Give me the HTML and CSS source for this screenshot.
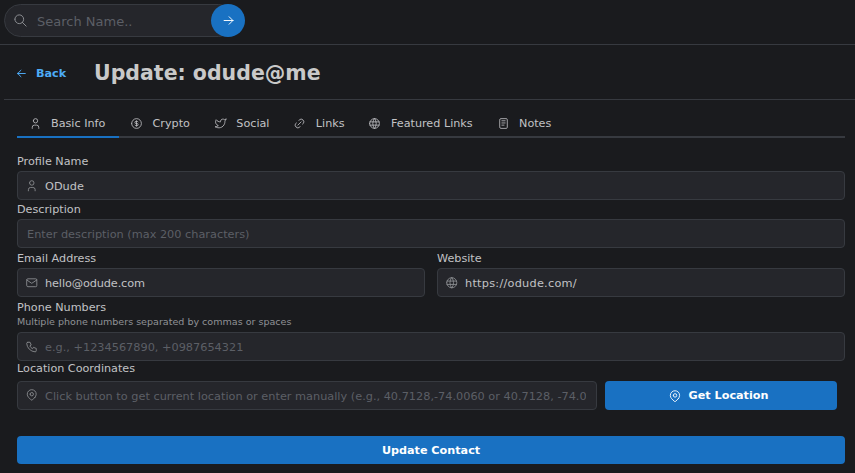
FILE: index.html
```html
<!DOCTYPE html>
<html lang="en">
<head>
<meta charset="utf-8">
<title>Update: odude@me</title>
<link rel="stylesheet" href="styles.css">
</head>
<body>
<svg class="defs" width="0" height="0" aria-hidden="true">
  <defs>
    <symbol id="i-user" viewBox="0 0 24 24"><path d="M8 7a4 4 0 1 0 8 0a4 4 0 0 0-8 0"/><path d="M6 21v-2a4 4 0 0 1 4-4h4a4 4 0 0 1 4 4v2"/></symbol>
    <symbol id="i-coin" viewBox="0 0 24 24"><path d="M3 12a9 9 0 1 0 18 0a9 9 0 0 0-18 0"/><path d="M14.8 9a2 2 0 0 0-1.8-1h-2a2 2 0 1 0 0 4h2a2 2 0 1 1 0 4h-2a2 2 0 0 1-1.8-1"/><path d="M12 7v10"/></symbol>
    <symbol id="i-twitter" viewBox="0 0 24 24"><path d="M22 4.01c-1 .49-1.98.689-3 .99c-1.121-1.265-2.783-1.335-4.38-.737S11.977 6.323 12 8v1c-3.245.083-6.135-1.395-8-4c0 0-4.182 7.433 4 11c-1.872 1.247-3.739 2.088-6 2c3.308 1.803 6.913 2.423 10.034 1.517c3.58-1.04 6.522-3.723 7.651-7.742a13.84 13.84 0 0 0 .497-3.753c0-.249 1.51-2.772 1.818-4.013z"/></symbol>
    <symbol id="i-link" viewBox="0 0 24 24"><path d="M9 15l6-6"/><path d="M11 6l.463-.536a5 5 0 0 1 7.071 7.072L18 13"/><path d="M13 18l-.397.534a5.068 5.068 0 0 1-7.127 0a4.972 4.972 0 0 1 0-7.071L6 11"/></symbol>
    <symbol id="i-world" viewBox="0 0 24 24"><path d="M3 12a9 9 0 1 0 18 0a9 9 0 0 0-18 0"/><path d="M3.6 9h16.8"/><path d="M3.6 15h16.8"/><path d="M11.5 3a17 17 0 0 0 0 18"/><path d="M12.5 3a17 17 0 0 1 0 18"/></symbol>
    <symbol id="i-notes" viewBox="0 0 24 24"><path d="M5 5a2 2 0 0 1 2-2h10a2 2 0 0 1 2 2v14a2 2 0 0 1-2 2H7a2 2 0 0 1-2-2z"/><path d="M9 7h6"/><path d="M9 11h6"/><path d="M9 15h4"/></symbol>
    <symbol id="i-mail" viewBox="0 0 24 24"><path d="M3 7a2 2 0 0 1 2-2h14a2 2 0 0 1 2 2v10a2 2 0 0 1-2 2H5a2 2 0 0 1-2-2z"/><path d="M3 7l9 6l9-6"/></symbol>
    <symbol id="i-phone" viewBox="0 0 24 24"><path d="M5 4h4l2 5l-2.5 1.5a11 11 0 0 0 5 5l1.5-2.5l5 2v4a2 2 0 0 1-2 2A16 16 0 0 1 3 6a2 2 0 0 1 2-2"/></symbol>
    <symbol id="i-pin" viewBox="0 0 24 24"><path d="M9 11a3 3 0 1 0 6 0a3 3 0 0 0-6 0"/><path d="M17.657 16.657L13.414 20.9a2 2 0 0 1-2.827 0l-4.244-4.243a8 8 0 1 1 11.314 0z"/></symbol>
    <symbol id="i-search" viewBox="0 0 24 24"><path d="M3 10a7 7 0 1 0 14 0a7 7 0 0 0-14 0"/><path d="M21 21l-6-6"/></symbol>
    <symbol id="i-right" viewBox="0 0 24 24"><path d="M5 12h14"/><path d="M13 18l6-6"/><path d="M13 6l6 6"/></symbol>
    <symbol id="i-left" viewBox="0 0 24 24"><path d="M5 12h14"/><path d="M5 12l6 6"/><path d="M5 12l6-6"/></symbol>
  </defs>
</svg>

<header class="topbar">
  <div class="search">
    <svg class="icon search-icon"><use href="#i-search"/></svg>
    <input class="search-input" type="text" placeholder="Search Name..">
    <button class="search-go" type="button"><svg class="icon go-icon"><use href="#i-right"/></svg></button>
  </div>
</header>

<main class="page">
  <div class="title-row">
    <a class="back" href="#"><svg class="icon back-icon"><use href="#i-left"/></svg><span>Back</span></a>
    <h1 class="title">Update: odude@me</h1>
  </div>

  <section class="panel">
    <nav class="tabs">
      <a class="tab tab-active" href="#"><svg class="icon tab-icon"><use href="#i-user"/></svg>Basic Info</a>
      <a class="tab" href="#"><svg class="icon tab-icon"><use href="#i-coin"/></svg>Crypto</a>
      <a class="tab" href="#"><svg class="icon tab-icon"><use href="#i-twitter"/></svg>Social</a>
      <a class="tab" href="#"><svg class="icon tab-icon"><use href="#i-link"/></svg>Links</a>
      <a class="tab" href="#"><svg class="icon tab-icon"><use href="#i-world"/></svg>Featured Links</a>
      <a class="tab" href="#"><svg class="icon tab-icon"><use href="#i-notes"/></svg>Notes</a>
    </nav>

    <form class="form">
      <div class="field">
        <label class="label">Profile Name</label>
        <div class="control"><svg class="icon ctl-icon"><use href="#i-user"/></svg><input class="input" type="text" value="ODude"></div>
      </div>
      <div class="field">
        <label class="label">Description</label>
        <div class="control control-plain"><input class="input" type="text" placeholder="Enter description (max 200 characters)"></div>
      </div>
      <div class="two-col">
        <div class="field">
          <label class="label">Email Address</label>
          <div class="control"><svg class="icon ctl-icon"><use href="#i-mail"/></svg><input class="input input-email" type="text" value="hello@odude.com"></div>
        </div>
        <div class="field">
          <label class="label">Website</label>
          <div class="control"><svg class="icon ctl-icon"><use href="#i-world"/></svg><input class="input input-url" type="text" value="https://odude.com/"></div>
        </div>
      </div>
      <div class="field">
        <label class="label">Phone Numbers</label>
        <p class="help">Multiple phone numbers separated by commas or spaces</p>
        <div class="control"><svg class="icon ctl-icon"><use href="#i-phone"/></svg><input class="input" type="text" placeholder="e.g., +1234567890, +0987654321"></div>
      </div>
      <div class="location">
        <div class="field location-field">
          <label class="label">Location Coordinates</label>
          <div class="control"><svg class="icon ctl-icon"><use href="#i-pin"/></svg><input class="input" type="text" placeholder="Click button to get current location or enter manually (e.g., 40.7128,-74.0060 or 40.7128, -74.0060)"></div>
        </div>
        <button class="btn btn-location" type="button"><svg class="icon btn-icon"><use href="#i-pin"/></svg>Get Location</button>
      </div>
      <button class="btn btn-submit" type="button">Update Contact</button>
    </form>
  </section>
</main>
</body>
</html>
```
FILE: styles.css
```css
* { box-sizing: border-box; }
html, body { height: 100%; }
body {
  margin: 0;
  background: #1a1b1e;
  color: #c1c2c5;
  font-family: "DejaVu Sans", Verdana, sans-serif;
  font-size: 11.2px;
  overflow: hidden;
}
.defs { position: absolute; }
.icon {
  fill: none;
  stroke: currentColor;
  stroke-width: 1.5;
  stroke-linecap: round;
  stroke-linejoin: round;
  flex: none;
}

.topbar {
  height: 45px;
  padding: 4px 0 0 4px;
  border-bottom: 1px solid #373a40;
}
.search {
  display: flex;
  align-items: center;
  width: 241px;
  height: 33px;
  position: relative;
}
.search-input {
  width: 231px;
  height: 33px;
  padding: 1px 30px 0 32px;
  border: 1px solid #373a40;
  border-radius: 17px;
  background: #25262b;
  color: #c1c2c5;
  font: 13px "DejaVu Sans", sans-serif;
  outline: none;
}
.search-input::placeholder { color: #5c5f66; }
.search-icon {
  position: absolute;
  left: 8.5px;
  top: 8.5px;
  width: 15px;
  height: 15px;
  color: #909296;
}
.search-go {
  position: absolute;
  left: 207px;
  top: 0;
  width: 34px;
  height: 33px;
  padding: 0;
  display: flex;
  align-items: center;
  justify-content: center;
  border: 0;
  border-radius: 50%;
  background: #1971c2;
  color: #fff;
}
.go-icon { width: 15px; height: 15px; }

.page { padding: 0 10px 0 4px; }
.title-row {
  display: flex;
  align-items: center;
  height: 55px;
  padding: 2px 0 0 11px;
  border-bottom: 1px solid #373a40;
  margin-right: -10px;
}
.back {
  display: flex;
  align-items: center;
  gap: 8px;
  width: 79px;
  color: #4dabf7;
  font-weight: 700;
  font-size: 11.2px;
  text-decoration: none;
}
.back-icon { width: 13px; height: 13px; stroke-width: 1.8; }
.title {
  margin: 0;
  font-size: 20.5px;
  font-weight: 700;
  color: #c9c9c9;
}

.panel { padding: 0 0 0 13px; }
.tabs {
  display: flex;
  height: 38px;
  border-bottom: 2px solid #373a40;
}
.tab {
  display: flex;
  align-items: center;
  gap: 9.5px;
  height: 38px;
  padding: 9px 13.2px 0 10.7px;
  color: #c1c2c5;
  font-size: 11.2px;
  text-decoration: none;
}
.tab-active { padding: 9px 14px 0 11.5px; box-shadow: inset 0 -2px 0 #1971c2; }
.tab-icon { width: 13px; height: 13px; }

.form { display: flex; flex-direction: column; padding-top: 13.2px; }
.field { display: flex; flex-direction: column; min-width: 0; }
.label {
  font-size: 11.2px;
  line-height: 17.6px;
  padding-top: 1.6px;
  margin-bottom: 0.4px;
  color: #c1c2c5;
}
.help { margin: -1.4px 0 2px; font-size: 9.55px; line-height: 14.8px; color: #909296; }
.control {
  display: flex;
  align-items: center;
  height: 29px;
  padding: 0 10px 0 6.5px;
  gap: 7px;
  border: 1px solid #373a40;
  border-radius: 4px;
  background: #25262b;
}
.control-plain { padding-left: 9px; }
.ctl-icon { width: 13.5px; height: 13.5px; color: #909296; }
.input {
  flex: 1;
  min-width: 0;
  border: 0;
  padding: 2px 0 0;
  background: transparent;
  color: #c1c2c5;
  font: 11.3px "DejaVu Sans", sans-serif;
  outline: none;
}
.input::placeholder { color: #5c5f66; }
.input-email { letter-spacing: -0.12px; }
.input-url { letter-spacing: 0.25px; }

.two-col { display: grid; grid-template-columns: 1fr 1fr; column-gap: 12px; }
.location { display: flex; align-items: flex-end; gap: 8px; padding-right: 8px; margin-bottom: 26.2px; }
.location-field { flex: 1; }
.location-field .label { padding-top: 0; margin-top: -1px; margin-bottom: 3.2px; }

.btn {
  display: flex;
  align-items: center;
  justify-content: center;
  border: 0;
  border-radius: 4px;
  background: #1971c2;
  color: #fff;
  font: 700 11.2px "DejaVu Sans", sans-serif;
  padding: 1px 0 0;
}
.btn-location { width: 232px; height: 29px; gap: 7px; flex: none; padding-right: 6px; }
.btn-icon { width: 14px; height: 14px; }
.btn-submit { height: 28px; width: 100%; }
```
